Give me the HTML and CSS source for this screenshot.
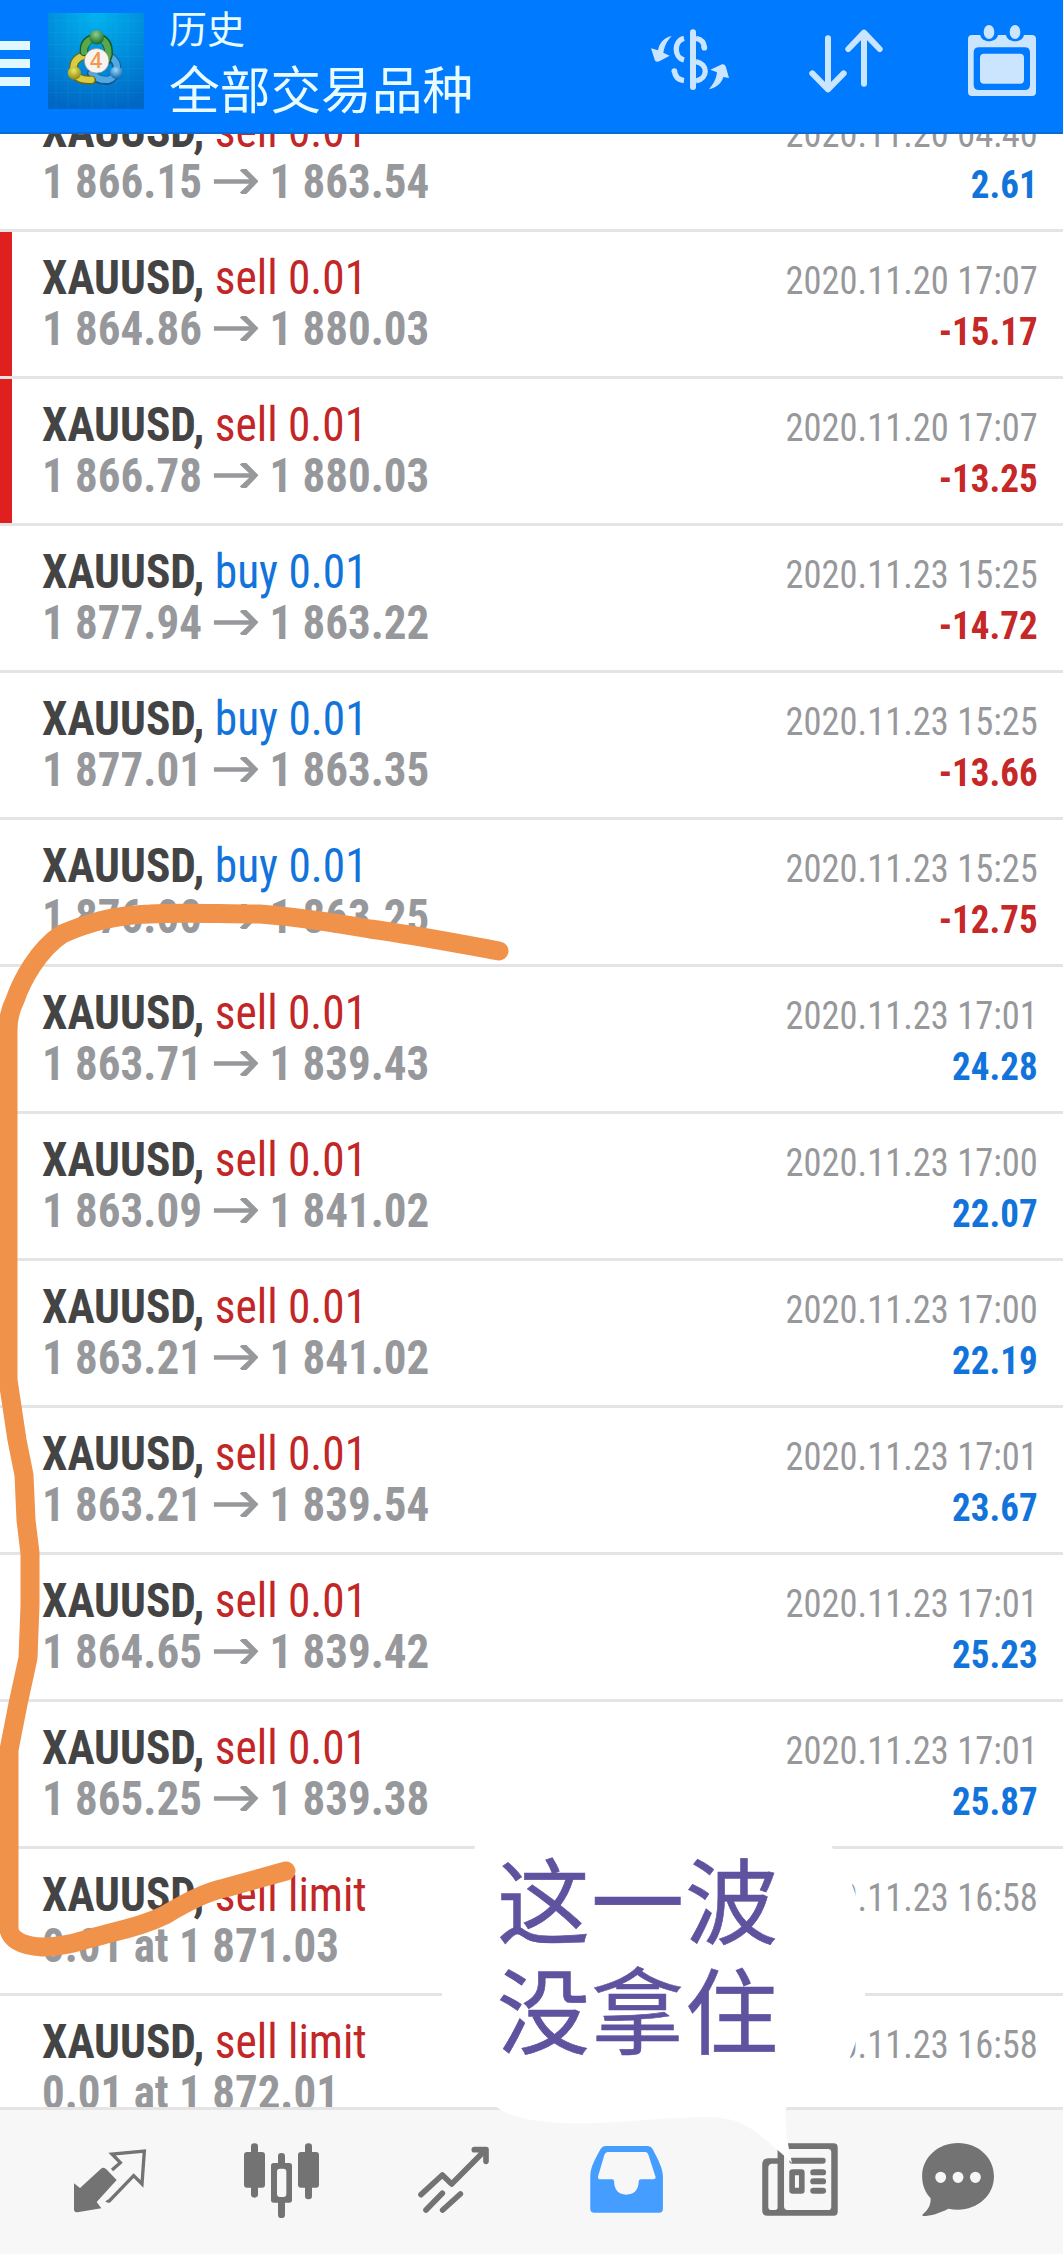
FILE: index.html
```
<!DOCTYPE html>
<html lang="zh">
<head>
<meta charset="utf-8">
<title>历史</title>
<link rel="stylesheet" href="styles.css">
</head>
<body>
<svg width="0" height="0" class="defs" aria-hidden="true">
  <symbol id="arrow" viewBox="0 0 48 27" preserveAspectRatio="none"><path d="M0 11H38L28 1.500L30 0H35L48 13.2L35 27H30L28 25.500L38 16H0Z"/></symbol>
</svg>
<div class="app">
  <header class="topbar">
    <svg class="menu" viewBox="0 0 30 46"><path d="M0 0H30V9H0ZM0 18H30V27H0ZM0 36H30V45H0Z"/></svg>
    <svg class="logo" viewBox="24 25 288 289" preserveAspectRatio="none">
      <defs>
        <radialGradient id="bg" cx=".5" cy="0" r="1"><stop offset="0" stop-color="#00b4ee"/><stop offset=".5" stop-color="#008fdc"/><stop offset="1" stop-color="#0068c4"/></radialGradient>
        <radialGradient id="g" cx=".45" cy=".3" r=".7"><stop offset="0" stop-color="#8fd08a"/><stop offset="1" stop-color="#12682a"/></radialGradient>
        <radialGradient id="y" cx=".45" cy=".3" r=".7"><stop offset="0" stop-color="#f0ea60"/><stop offset="1" stop-color="#8a8410"/></radialGradient>
        <radialGradient id="b" cx=".45" cy=".3" r=".7"><stop offset="0" stop-color="#9bdcff"/><stop offset="1" stop-color="#1266ae"/></radialGradient>
      </defs>
      <rect x="24" y="25" width="288" height="289" fill="url(#bg)"/>
      <path class="grid" d="M48 25V314M84 25V314M120 25V314M156 25V314M192 25V314M228 25V314M264 25V314M24 48H312M24 84H312M24 120H312M24 156H312M24 192H312M24 228H312M24 264H312"/>
      <g fill="none" stroke-linecap="round">
        <path d="M215 160A40 40 0 0 1 206 228Q172 232 153 207" stroke="#1b548b" stroke-width="26"/>
        <path d="M216 160A38 38 0 0 1 205 226Q174 229 155 206" stroke="#4fa9e2" stroke-width="19"/>
        <path d="M130 154Q100 162 100 195Q103 230 155 227" stroke="#6b6510" stroke-width="26"/>
        <path d="M130 154Q100 162 100 195Q105 228 154 226" stroke="#d8cc43" stroke-width="19"/>
        <path d="M132 142Q130 104 170 98Q208 104 206 150L199 170" stroke="#155b2c" stroke-width="26"/>
        <path d="M132 142Q131 106 170 99Q206 105 205 149L199 167" stroke="#57a94e" stroke-width="19"/>
      </g>
      <circle cx="170" cy="98" r="22" fill="url(#g)"/>
      <circle cx="103" cy="206" r="20" fill="url(#y)"/>
      <circle cx="229" cy="204" r="19" fill="url(#b)"/>
      <circle cx="170" cy="169" r="37" fill="#f6f4f3" stroke="#998f78" stroke-width="2"/>
      <text x="168" y="192" text-anchor="middle" class="four">4</text>
    </svg>
    <div class="titles">
      <div class="sub">历史</div>
      <div class="main">全部交易品种</div>
    </div>
    <div class="actions">
      <svg viewBox="150 72 240 216">
        <rect x="270" y="88" width="18" height="182" rx="9"/>
        <path class="line butt" d="M252 115C222 122 220 172 252 180M288 115C304 118 313 128 313 144M288 185C325 192 325 236 288 243M223 212C225 230 236 240 252 242"/>
        <circle cx="313" cy="143" r="8.5"/><circle cx="223" cy="213" r="8.5"/>
        <path d="M215 108C190 113 178 130 174 151L153 145L165 182Q170 187 178 184L209 167L190 158C194 138 200 124 215 108ZM327 268C350 262 365 250 370 231L387 234L377 199Q374 192 366 193L331 209L351 217C348 240 340 252 327 268Z"/>
      </svg>
      <svg viewBox="618 72 240 216"><path class="line" d="M684 115V265M637 220L684 268L731 220M792 251V99M745 147L792 98L839 147"/></svg>
      <svg viewBox="1086 72 240 216">
        <path d="M1116 105H1141C1144 130 1190 130 1194 105H1218C1222 130 1268 130 1272 105H1296Q1308 105 1308 117V276Q1308 288 1296 288H1116Q1104 288 1104 276V117Q1104 105 1116 105ZM1137 142Q1121 142 1121 158V254Q1121 270 1137 270H1274Q1290 270 1290 254V158Q1290 142 1274 142Z" fill-rule="evenodd"/>
        <rect x="1140" y="161" width="132" height="90" rx="12"/>
        <ellipse cx="1167" cy="96" rx="16" ry="21"/><ellipse cx="1245" cy="96" rx="16" ry="21"/>
      </svg>
    </div>
  </header>

  <main class="list">
    <div class="row"><div class="deal"><div><b>XAUUSD,</b> <span class="sell">sell 0.01</span></div><div class="price">1 866.15<svg class="to"><use href="#arrow"/></svg>1 863.54</div></div><div class="info"><div class="date">2020.11.20 04:40</div><div class="profit">2.61</div></div></div>
    <div class="row stop"><div class="deal"><div><b>XAUUSD,</b> <span class="sell">sell 0.01</span></div><div class="price">1 864.86<svg class="to"><use href="#arrow"/></svg>1 880.03</div></div><div class="info"><div class="date">2020.11.20 17:07</div><div class="profit loss">-15.17</div></div></div>
    <div class="row stop"><div class="deal"><div><b>XAUUSD,</b> <span class="sell">sell 0.01</span></div><div class="price">1 866.78<svg class="to"><use href="#arrow"/></svg>1 880.03</div></div><div class="info"><div class="date">2020.11.20 17:07</div><div class="profit loss">-13.25</div></div></div>
    <div class="row"><div class="deal"><div><b>XAUUSD,</b> <span class="buy">buy 0.01</span></div><div class="price">1 877.94<svg class="to"><use href="#arrow"/></svg>1 863.22</div></div><div class="info"><div class="date">2020.11.23 15:25</div><div class="profit loss">-14.72</div></div></div>
    <div class="row"><div class="deal"><div><b>XAUUSD,</b> <span class="buy">buy 0.01</span></div><div class="price">1 877.01<svg class="to"><use href="#arrow"/></svg>1 863.35</div></div><div class="info"><div class="date">2020.11.23 15:25</div><div class="profit loss">-13.66</div></div></div>
    <div class="row"><div class="deal"><div><b>XAUUSD,</b> <span class="buy">buy 0.01</span></div><div class="price">1 876.00<svg class="to"><use href="#arrow"/></svg>1 863.25</div></div><div class="info"><div class="date">2020.11.23 15:25</div><div class="profit loss">-12.75</div></div></div>
    <div class="row"><div class="deal"><div><b>XAUUSD,</b> <span class="sell">sell 0.01</span></div><div class="price">1 863.71<svg class="to"><use href="#arrow"/></svg>1 839.43</div></div><div class="info"><div class="date">2020.11.23 17:01</div><div class="profit">24.28</div></div></div>
    <div class="row"><div class="deal"><div><b>XAUUSD,</b> <span class="sell">sell 0.01</span></div><div class="price">1 863.09<svg class="to"><use href="#arrow"/></svg>1 841.02</div></div><div class="info"><div class="date">2020.11.23 17:00</div><div class="profit">22.07</div></div></div>
    <div class="row"><div class="deal"><div><b>XAUUSD,</b> <span class="sell">sell 0.01</span></div><div class="price">1 863.21<svg class="to"><use href="#arrow"/></svg>1 841.02</div></div><div class="info"><div class="date">2020.11.23 17:00</div><div class="profit">22.19</div></div></div>
    <div class="row"><div class="deal"><div><b>XAUUSD,</b> <span class="sell">sell 0.01</span></div><div class="price">1 863.21<svg class="to"><use href="#arrow"/></svg>1 839.54</div></div><div class="info"><div class="date">2020.11.23 17:01</div><div class="profit">23.67</div></div></div>
    <div class="row"><div class="deal"><div><b>XAUUSD,</b> <span class="sell">sell 0.01</span></div><div class="price">1 864.65<svg class="to"><use href="#arrow"/></svg>1 839.42</div></div><div class="info"><div class="date">2020.11.23 17:01</div><div class="profit">25.23</div></div></div>
    <div class="row"><div class="deal"><div><b>XAUUSD,</b> <span class="sell">sell 0.01</span></div><div class="price">1 865.25<svg class="to"><use href="#arrow"/></svg>1 839.38</div></div><div class="info"><div class="date">2020.11.23 17:01</div><div class="profit">25.87</div></div></div>
    <div class="row"><div class="deal"><div><b>XAUUSD,</b> <span class="sell">sell limit</span></div><div class="price">0.01 at 1 871.03</div></div><div class="info"><div class="date">2020.11.23 16:58</div></div></div>
    <div class="row"><div class="deal"><div><b>XAUUSD,</b> <span class="sell">sell limit</span></div><div class="price">0.01 at 1 872.01</div></div><div class="info"><div class="date">2020.11.23 16:58</div></div></div>
  </main>

  <nav class="tabs">
    <svg viewBox="210 960 240 240">
      <path d="M222 1090L240 1104L303 1046Q311 1040 319 1048L350 1080L290 1146L304 1165L232 1177Q222 1178 222 1168Z"/>
      <path class="stroke" d="M336 1050L361 1028L336 1002L433 993L426 1092L401 1067L328 1143Q322 1144 320 1141" stroke-width="10"/>
    </svg>
    <svg viewBox="726 960 240 240">
      <rect x="732" y="996" width="63" height="107" rx="9"/><rect x="753" y="970" width="21" height="163" rx="10"/>
      <rect x="894" y="996" width="63" height="107" rx="9"/><rect x="915" y="970" width="21" height="168" rx="10"/>
      <rect x="834" y="999" width="21" height="40" rx="10"/><rect x="834" y="1140" width="21" height="54" rx="10"/>
      <path fill-rule="evenodd" d="M821 1029H868Q876 1029 876 1037V1140Q876 1148 868 1148H821Q813 1148 813 1140V1037Q813 1029 821 1029ZM840 1046Q831 1046 831 1055V1122Q831 1131 840 1131H850Q859 1131 859 1122V1055Q859 1046 850 1046Z"/>
    </svg>
    <svg viewBox="1242 960 240 240">
      <path class="stroke round" d="M1263 1124L1327 1065L1355 1092L1456 990M1423 989H1458V1024M1278 1170L1327 1120M1328 1170L1381 1122" stroke-width="17"/>
    </svg>
    <svg class="active" viewBox="386.4 1020 198.2 240" preserveAspectRatio="none">
      <path fill-rule="evenodd" d="M434 1038H540Q547 1038 551 1046C565 1078 577 1105 577 1130V1226Q577 1238 567 1238H407Q397 1238 397 1226V1130C397 1100 410 1075 423 1046Q427 1038 434 1038ZM440 1056Q435 1056 432 1064L416 1130Q416 1138 421 1138H451Q456 1138 456 1144C456 1170 468 1184 486 1184C505 1184 517 1170 517 1144Q517 1138 523 1138H553Q559 1138 559 1132L541 1064Q539 1056 534 1056Z"/>
    </svg>
    <svg viewBox="812.5 1020 198.2 240" preserveAspectRatio="none">
      <path fill-rule="evenodd" d="M873 1030H1000Q1010 1030 1010 1042V1235Q1010 1247 1000 1247H836Q823 1247 823 1232V1094Q823 1075 838 1075H861V1042Q861 1030 873 1030ZM882 1047Q877 1047 877 1053V1219Q877 1230 886 1230H986Q994 1230 994 1220V1057Q994 1047 986 1047ZM851 1091H846Q838 1093 838 1103V1220Q838 1230 846 1230H855Q861 1230 861 1222V1091Z"/>
      <rect x="890" y="1073" width="90" height="18" rx="7"/>
      <path fill-rule="evenodd" d="M899 1108H920Q928 1108 928 1117V1172Q928 1181 920 1181H899Q890 1181 890 1172V1117Q890 1108 899 1108ZM904 1126V1163H914V1126Z"/>
      <rect x="942" y="1108" width="39" height="18" rx="8"/><rect x="942" y="1135" width="39" height="18" rx="8"/><rect x="942" y="1163" width="39" height="18" rx="8"/>
    </svg>
    <svg class="chat" viewBox="1208.8 1020 198.2 240" preserveAspectRatio="none">
      <path fill-rule="evenodd" d="M1308 1029C1358 1029 1397 1073 1397 1129C1397 1186 1357 1229 1308 1229Q1296 1229 1284 1226C1262 1240 1240 1248 1222 1248Q1217 1246 1222 1241C1234 1230 1241 1214 1240 1195C1227 1178 1219 1156 1219 1129C1219 1073 1258 1029 1308 1029ZM1265 1115A13.500 17 0 1 0 1265 1149A13.500 17 0 1 0 1265 1115ZM1308 1115A13.500 17 0 1 0 1308 1149A13.500 17 0 1 0 1308 1115ZM1351 1115A13.500 17 0 1 0 1351 1149A13.500 17 0 1 0 1351 1115Z"/>
    </svg>
  </nav>

  <svg class="marks" viewBox="0 0 1063 2254">
    <path class="pen" d="M499 951C455 943 415 935 370 929C330 922 300 917 260 914C220 914 180 912 150 914C115 915 90 922 62 934C38 950 22 980 15 1000C10 1010 8 1020 8 1030V1380L17 1440L24 1475L26 1520L30 1553V1605L28 1658L18 1704L9 1750V1930C12 1942 25 1946 42 1947C60 1947 75 1943 95 1937C125 1929 145 1925 165 1915C185 1903 205 1892 225 1888L286 1871"/>
    <path class="bubble" d="M490 1830H820C828 1838 830 1842 833 1849C843 1866 850 1875 857 1899C864 1925 866 1960 865 1994C864 2015 859 2037 848 2062C830 2090 795 2098 786 2108C784 2125 788 2145 792 2163C780 2152 755 2128 738 2122C715 2114 690 2118 660 2119C620 2122 570 2126 540 2121C515 2118 500 2111 496 2106C455 2090 442 2040 442 1994C442 1930 455 1880 474 1849C478 1840 484 1834 490 1830Z"/>
  </svg>
  <div class="note">这一波<br>没拿住</div>
</div>
</body>
</html>
```
FILE: styles.css
```
body {
  margin: 0;
  background: #fff;
  font-family: "Roboto Condensed", Roboto, "Noto Sans CJK SC", sans-serif;
  font-stretch: 75%;
}
.defs { position: absolute; }
.app {
  position: relative;
  display: flex;
  flex-direction: column;
  width: 1063px;
  height: 2254px;
  overflow: hidden;
}
.topbar {
  display: flex;
  flex: none;
  box-sizing: border-box;
  height: 134px;
  background: #007bff;
  border-bottom: 2px solid #0c6bd0;
  color: #e8fbff;
}
.menu { width: 30px; height: 46px; margin-top: 41px; fill: #e0f8ff; }
.logo { width: 96px; height: 96px; margin: 13px 0 0 18px; }
.grid { fill: none; stroke: #5cc4f5; stroke-opacity: .14; stroke-width: 2; }
.four { font: 600 64px "Open Sans", sans-serif; fill: #f29a4c; }
.titles { margin-left: 25px; font-family: "Noto Sans CJK SC", sans-serif; }
.sub { font-size: 38px; line-height: 44px; margin-top: 5px; }
.main { font-size: 50.7px; line-height: 60px; margin-top: 8px; white-space: nowrap; }
.actions { display: flex; gap: 76px; margin: 24px 21px 0 auto; fill: #cce5ff; }
.actions svg { width: 80px; height: 72px; }
.line { fill: none; stroke: #cce5ff; stroke-width: 18; stroke-linecap: round; stroke-linejoin: round; }
.butt { stroke-width: 16; stroke-linecap: butt; }

.list { height: 1973px; flex: none; overflow: hidden; }
.row {
  display: flex;
  justify-content: space-between;
  box-sizing: border-box;
  height: 147px;
  padding: 20px 25px 0 42px;
  border-bottom: 3px solid #e4e4e4;
  font-size: 48px;
  line-height: 51px;
  white-space: nowrap;
}
.row:first-child { margin-top: -49px; }
.stop { background: linear-gradient(#e01f1f, #e01f1f) 0 0 / 12px 144px no-repeat; }
.deal { transform: scaleX(.945); transform-origin: left; color: #444; }
.price { font-weight: 700; color: #97989b; transform: scaleX(.992); transform-origin: left; }
.to { width: 48px; height: 25px; margin: 0 12px; vertical-align: 4.5px; fill: #97989b; }
.sell { color: #c22626; }
.buy { color: #1274da; }
.info { font-size: 39px; text-align: right; padding-top: 4px; transform: scaleX(.935); transform-origin: right; }
.date { color: #97989b; }
.profit { font-weight: 700; color: #1274da; transform: scaleX(1.015); transform-origin: right; }
.profit.loss { color: #c62727; }

.tabs {
  display: flex;
  flex: 1;
  gap: 92px;
  box-sizing: border-box;
  padding: 30px 0 0 70px;
  background: #f7f7f7;
  border-top: 3px solid #e4e4e4;
  fill: #737373;
}
.tabs svg { flex: none; width: 80px; height: 80px; }
.tabs .chat { margin-left: -12px; }
.tabs .active { fill: #459dff; }
.stroke { fill: none; stroke: #737373; stroke-linejoin: miter; }
.round { stroke-linecap: round; stroke-linejoin: round; }

.marks { position: absolute; inset: 0; width: 1063px; height: 2254px; }
.pen { fill: none; stroke: #f1924a; stroke-width: 19; stroke-linecap: round; stroke-linejoin: round; }
.bubble { fill: #fff; }
.note {
  position: absolute;
  left: 497px;
  top: 1842px;
  font: 93px/110px "Noto Sans CJK SC", sans-serif;
  letter-spacing: 1px;
  color: #5f529f;
  -webkit-text-stroke: .6px #5f529f;
}
```
